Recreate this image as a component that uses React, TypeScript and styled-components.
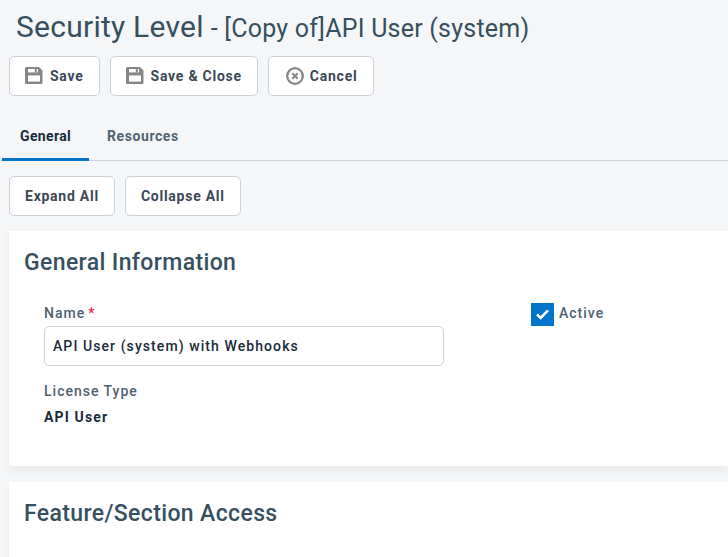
import React from "react";
import styled, { createGlobalStyle } from "styled-components";

const Global = createGlobalStyle`
  html, body { margin: 0; padding: 0; background: #f5f6f8; overflow: hidden; }
  body { font-family: Roboto, "Liberation Sans", sans-serif; }
`;

const Page = styled.div`
  width: 728px;
  height: 557px;
  overflow: hidden;
  background: #f5f6f8;
`;

const Header = styled.header`
  padding: 9px 0 0 16px;
  height: 56px;
  box-sizing: border-box;
  color: #36505f;
  white-space: nowrap;
`;

const Title = styled.h1`
  display: inline;
  margin: 0;
  font-size: 30px;
  line-height: 36px;
  font-weight: 400;
  letter-spacing: 0.25px;
`;

const Subtitle = styled.span`
  font-size: 25px;
  line-height: 36px;
  margin-left: 7px;
  letter-spacing: 0.22px;
`;

const Toolbar = styled.div`
  display: flex;
  gap: 10px;
  padding-left: 9px;
`;

const Button = styled.button`
  height: 40px;
  box-sizing: border-box;
  display: inline-flex;
  align-items: center;
  gap: 7px;
  padding: 0 15px;
  background: #fff;
  border: 1px solid #ccd3da;
  border-radius: 5px;
  font-family: inherit;
  font-size: 14px;
  font-weight: 700;
  letter-spacing: 0.75px;
  color: #3c4858;
`;

const CancelButton = styled(Button)`
  gap: 6px;
  padding: 0 16px 0 17px;
`;

const Tabs = styled.nav`
  display: flex;
  height: 45px;
  margin-top: 19px;
  padding-left: 2px;
  border-bottom: 1px solid #ccd3da;
`;

const Tab = styled.div<{ $active?: boolean }>`
  box-sizing: border-box;
  height: 46px;
  padding: 0 18px 2px;
  display: flex;
  align-items: center;
  font-size: 14px;
  font-weight: 700;
  letter-spacing: ${(p) => (p.$active ? "0.35px" : "0.57px")};
  color: ${(p) => (p.$active ? "#1a2c3c" : "#50656f")};
  border-bottom: ${(p) => (p.$active ? "3px solid #0274c9" : "3px solid transparent")};
`;

const SecondaryBar = styled(Toolbar)`
  margin-top: 15px;
`;

const Card = styled.section<{ $height: number; $gap: number }>`
  margin: ${(p) => p.$gap}px 0 0 9px;
  height: ${(p) => p.$height}px;
  box-sizing: border-box;
  background: #fff;
  padding: 16px 15px 0;
  box-shadow: 0 4px 10px rgba(0, 0, 0, 0.05);
`;

const CardTitle = styled.h2`
  margin: 0;
  font-size: 23px;
  line-height: 32px;
  font-weight: 500;
  color: #36505f;
  letter-spacing: 0.37px;
`;

const FormRow = styled.div`
  display: flex;
  margin-top: 26px;
  padding-left: 20px;
`;

const Column = styled.div`
  width: 400px;
`;

const Label = styled.div`
  font-size: 14px;
  line-height: 16px;
  font-weight: 500;
  color: #4f6170;
  letter-spacing: 1px;
`;

const Required = styled.span`
  color: #e0284a;
  margin-left: 3px;
`;

const Input = styled.input`
  display: block;
  width: 400px;
  height: 40px;
  box-sizing: border-box;
  margin-top: 5px;
  padding: 0 8px;
  border: 1px solid #ccd3da;
  border-radius: 5px;
  background: #fff;
  font-family: inherit;
  font-size: 14px;
  font-weight: 500;
  letter-spacing: 1.08px;
  color: #1a2c3c;
  outline: none;
`;

const LicenseLabel = styled(Label)`
  margin-top: 17px;
`;

const Value = styled.div`
  margin-top: 10px;
  font-size: 14px;
  line-height: 16px;
  font-weight: 700;
  letter-spacing: 1.15px;
  color: #1a2c3c;
`;

const ActiveField = styled.label`
  display: flex;
  align-items: center;
  gap: 5px;
  margin: -2px 0 0 87px;
  height: 23px;
`;

const CheckBox = styled.span`
  width: 23px;
  height: 23px;
  background: #0274c9;
  display: flex;
  align-items: center;
  justify-content: center;
`;

const ActiveText = styled(Label)`
  margin-top: -3px;
`;

const SaveIcon = () => (
  <svg width="18" height="18" viewBox="0 0 18 18" fill="none">
    <path
      d="M1.5 0H14l3.5 3.5V15.5A1.5 1.5 0 0 1 16 17H1.5A1.5 1.5 0 0 1 0 15.5V1.5A1.5 1.5 0 0 1 1.5 0Z"
      fill="#868686"
    />
    <rect x="3" y="2" width="10" height="3.4" fill="#fff" />
    <rect x="9.8" y="2" width="2" height="3.4" fill="#868686" />
    <rect x="3" y="8.4" width="12" height="6.2" fill="#fff" />
  </svg>
);

const CancelIcon = () => (
  <svg width="18" height="18" viewBox="0 0 18 18" fill="none">
    <circle cx="9" cy="9" r="7.8" stroke="#868686" strokeWidth="2.3" />
    <path d="M6.3 6.3l5.4 5.4M11.7 6.3l-5.4 5.4" stroke="#868686" strokeWidth="2" />
  </svg>
);

export default function App() {
  return (
    <Page>
      <Global />
      <Header>
        <Title>Security Level</Title>
        <Subtitle>- [Copy of]API User (system)</Subtitle>
      </Header>
      <Toolbar>
        <Button>
          <SaveIcon />
          Save
        </Button>
        <Button>
          <SaveIcon />
          Save &amp; Close
        </Button>
        <CancelButton>
          <CancelIcon />
          Cancel
        </CancelButton>
      </Toolbar>
      <Tabs>
        <Tab $active>General</Tab>
        <Tab>Resources</Tab>
      </Tabs>
      <SecondaryBar>
        <Button>Expand All</Button>
        <Button>Collapse All</Button>
      </SecondaryBar>
      <Card $height={235} $gap={15}>
        <CardTitle>General Information</CardTitle>
        <FormRow>
          <Column>
            <Label>
              Name<Required>*</Required>
            </Label>
            <Input readOnly value="API User (system) with Webhooks" />
            <LicenseLabel>License Type</LicenseLabel>
            <Value>API User</Value>
          </Column>
          <ActiveField>
            <CheckBox>
              <svg width="15" height="13" viewBox="0 0 15 13" fill="none">
                <path d="M2 6.4l3.6 3.6L13 2.4" stroke="#fff" strokeWidth="2.6" />
              </svg>
            </CheckBox>
            <ActiveText>Active</ActiveText>
          </ActiveField>
        </FormRow>
      </Card>
      <Card $height={100} $gap={16}>
        <CardTitle>Feature/Section Access</CardTitle>
      </Card>
    </Page>
  );
}
